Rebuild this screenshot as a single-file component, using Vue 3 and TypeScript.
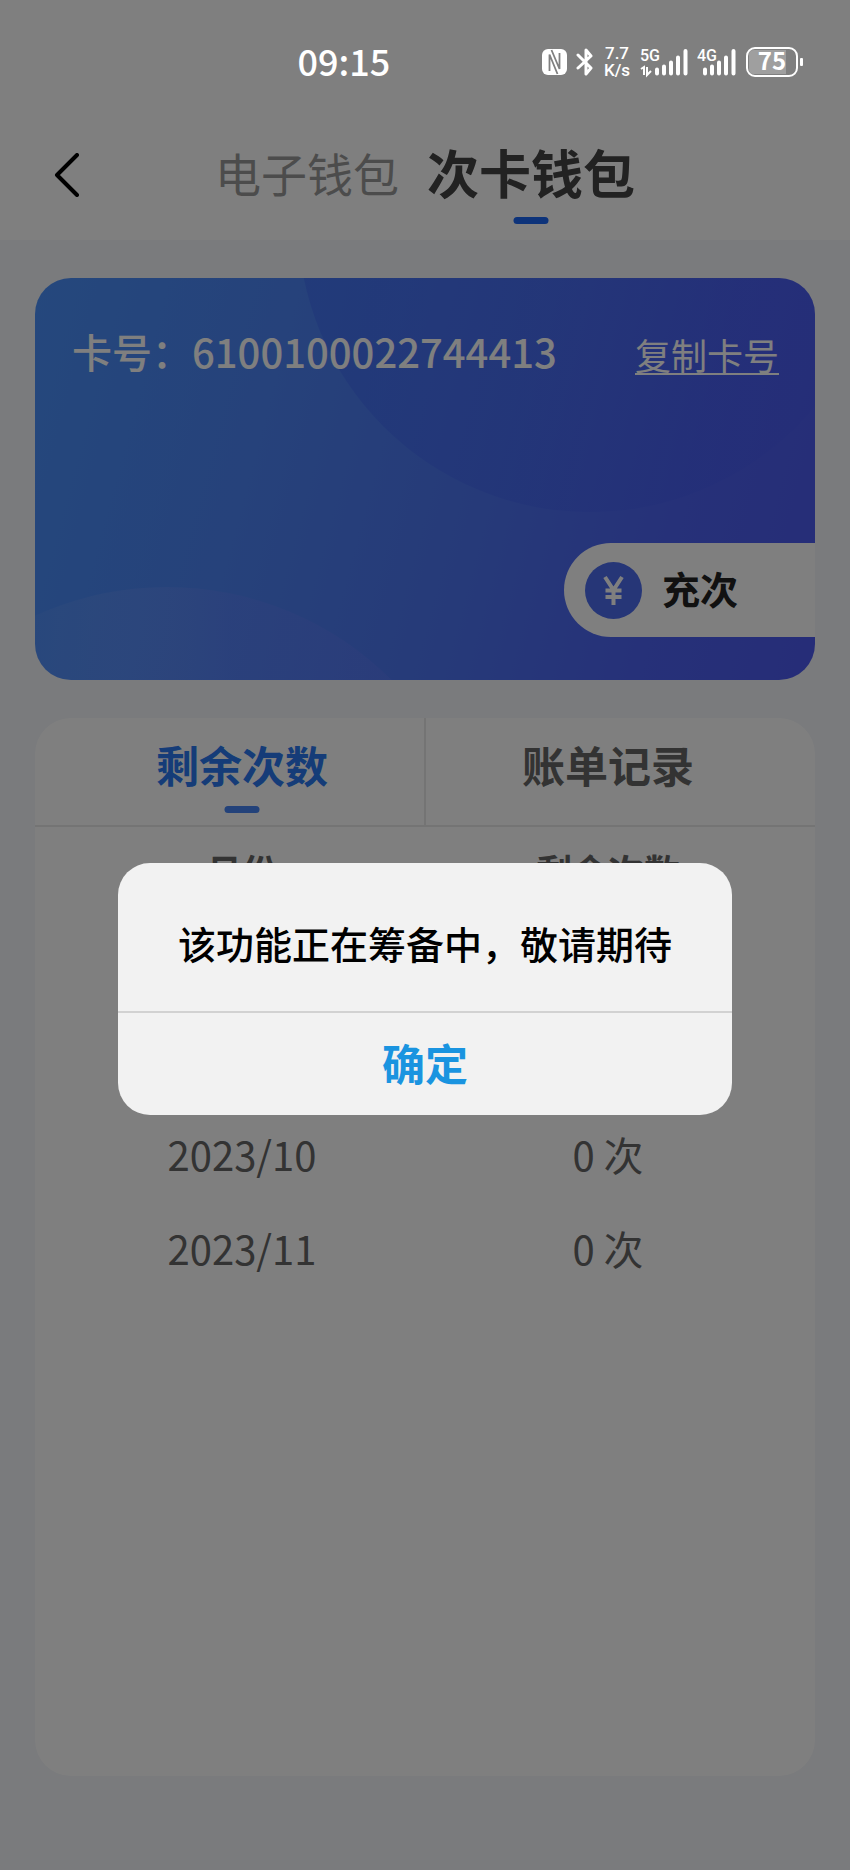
<script setup lang="ts">
import { ref } from 'vue'

interface Row {
  month: string
  count: number
}

const cardNumber = '6100100022744413'
const walletTabs = ['电子钱包', '次卡钱包']
const activeWallet = ref(1)
const listTabs = ['剩余次数', '账单记录']
const activeList = ref(0)
const rows: Row[] = [
  { month: '2023/08', count: 0 },
  { month: '2023/09', count: 0 },
  { month: '2023/10', count: 0 },
  { month: '2023/11', count: 0 },
]
const dialogOpen = ref(true)

function copyNumber() {
  navigator.clipboard?.writeText(cardNumber)
}
</script>

<template>
  <div class="page">
    <div class="status">
      <span class="time">09:15</span>
      <div class="indicators">
        <svg class="nfc" viewBox="0 0 25 26" aria-hidden="true">
          <rect width="25" height="26" rx="6" fill="#fff" />
          <path d="M7.500 22V5.500L15.500 25M9.500 1L17.500 20V4" fill="none" stroke="#808080" stroke-width="1.800" />
        </svg>
        <svg class="bluetooth" viewBox="0 0 18 28" aria-hidden="true">
          <path d="M2 7l13 13-5 6V2l5 6L2 20" fill="none" stroke="#fff" stroke-width="3" stroke-linejoin="round" stroke-linecap="round" />
        </svg>
        <div class="speed"><span>7.7</span><span>K/s</span></div>
        <svg class="signal-5g" viewBox="0 -4 48 36" aria-hidden="true">
          <text x="0" y="13" class="net">5G</text>
          <path d="M1 21l3-2v8M7 19v8l4-4" fill="none" stroke="#fff" stroke-width="2" />
          <path d="M17 21.500v4M24 18.500v7M31 14.500v11M38 9.500v16M45.500 3v22.500" stroke="#fff" stroke-width="4" stroke-linecap="round" />
        </svg>
        <svg class="signal-4g" viewBox="0 -4 40 36" aria-hidden="true">
          <text x="0" y="13" class="net">4G</text>
          <path d="M8 21.500v4M15 18.500v7M22 14.500v11M29 9.500v16M36.500 3v22.500" stroke="#fff" stroke-width="4" stroke-linecap="round" />
        </svg>
        <svg class="battery" viewBox="0 0 58 30" aria-hidden="true">
          <path d="M8 3h32v24H8q-5 0-5-5V8q0-5 5-5z" fill="#fff" fill-opacity=".25" />
          <rect x="1" y="1" width="50" height="28" rx="8" fill="none" stroke="#fff" stroke-width="2" />
          <rect x="54" y="11" width="3" height="8" rx="1" fill="#fff" />
          <text x="26" y="23" class="charge">75</text>
        </svg>
      </div>
    </div>

    <header class="topbar">
      <button class="back" type="button" aria-label="返回">
        <svg viewBox="0 0 26 44" aria-hidden="true">
          <path d="M23 2L3 22l20 20" fill="none" stroke="#000" stroke-width="4" stroke-linecap="round" stroke-linejoin="round" />
        </svg>
      </button>
      <nav class="wallets">
        <button
          v-for="(name, i) in walletTabs"
          :key="name"
          type="button"
          class="wallet"
          :class="{ active: i === activeWallet }"
          @click="activeWallet = i"
        >{{ name }}</button>
      </nav>
    </header>

    <main class="content">
      <section class="card">
        <svg class="card-art" viewBox="0 0 780 402" preserveAspectRatio="xMidYMid slice" aria-hidden="true">
          <defs>
            <linearGradient id="upper" x1="0" x2="1">
              <stop offset="0" stop-color="#3860f0" stop-opacity=".4" />
              <stop offset="1" stop-color="#4050f0" stop-opacity=".1" />
            </linearGradient>
            <linearGradient id="lower" x1="0" x2="1">
              <stop offset="0.200" stop-color="#fff" stop-opacity="0" />
              <stop offset="0.600" stop-color="#7a80ff" stop-opacity=".2" />
            </linearGradient>
          </defs>
          <circle cx="555" cy="-58" r="292" fill="url(#upper)" />
          <circle cx="132" cy="627" r="318" fill="url(#lower)" />
        </svg>
        <div class="card-head">
          <span class="number">卡号：{{ cardNumber }}</span>
          <button class="copy" type="button" @click="copyNumber">复制卡号</button>
        </div>
        <button class="recharge" type="button" @click="dialogOpen = true">
          <svg viewBox="0 0 57 57" aria-hidden="true">
            <circle cx="28.500" cy="28.500" r="28.500" fill="#4c6cee" />
            <path d="M20 15l8.500 13L37 15M28.500 28v15M20.500 28.500h16M20.500 35h16" fill="none" stroke="#fff" stroke-width="4" />
          </svg>
          <span>充次</span>
        </button>
      </section>

      <section class="panel">
        <div class="tabs">
          <button
            v-for="(name, i) in listTabs"
            :key="name"
            type="button"
            class="tab"
            :class="{ active: i === activeList }"
            @click="activeList = i"
          >{{ name }}</button>
        </div>
        <table class="records">
          <thead>
            <tr><th scope="col">月份</th><th scope="col">剩余次数</th></tr>
          </thead>
          <tbody>
            <tr v-for="row in rows" :key="row.month">
              <td>{{ row.month }}</td>
              <td>{{ row.count }} 次</td>
            </tr>
          </tbody>
        </table>
      </section>
    </main>

    <div v-if="dialogOpen" class="mask">
      <div class="dialog" role="alertdialog" aria-modal="true" aria-describedby="notice">
        <p id="notice">该功能正在筹备中，敬请期待</p>
        <button type="button" @click="dialogOpen = false">确定</button>
      </div>
    </div>
  </div>
</template>

<style>
body {
  background: #f4f6fa;
}
</style>

<style scoped>
.page {
  position: relative;
  display: flex;
  flex-direction: column;
  min-height: 100vh;
  background: #f4f6fa;
  font-family: "Noto Sans CJK SC", "Noto Sans", sans-serif;
  color: #666;
}
button {
  margin: 0;
  padding: 0;
  border: 0;
  background: none;
  color: inherit;
  font: inherit;
  cursor: pointer;
}
svg {
  display: block;
  flex: none;
}
.status {
  display: flex;
  align-items: center;
  justify-content: space-between;
  height: 108px;
  padding: 16px 46px 0 35%;
  box-sizing: border-box;
  background: #fff;
  color: #fff;
}
.time,
.indicators {
  position: relative;
  z-index: 3;
}
.time {
  padding-bottom: 4px;
  font-size: 36px;
  line-height: 40px;
  font-weight: 500;
}
.indicators {
  display: flex;
  align-items: center;
  gap: 9px;
}
.nfc { width: 25px; height: 26px; }
.bluetooth { width: 18px; height: 28px; }
.signal-5g { width: 48px; height: 36px; }
.signal-4g { width: 40px; height: 36px; }
.battery { width: 58px; height: 30px; }
.speed {
  display: flex;
  flex-direction: column;
  align-items: center;
  width: 28px;
  font: 500 17px/17px Roboto, sans-serif;
}
.net {
  font: 500 16px Roboto, sans-serif;
  fill: #fff;
}
.charge {
  font: 700 24px "Noto Sans CJK SC", sans-serif;
  text-anchor: middle;
  fill: #fff;
}
.topbar {
  position: relative;
  display: flex;
  justify-content: center;
  height: 132px;
  background: #fff;
}
.back {
  position: absolute;
  left: 54px;
  top: 45px;
}
.back svg {
  width: 26px;
  height: 44px;
}
.wallets {
  display: flex;
  align-items: flex-start;
  gap: 28px;
}
.wallet {
  height: 132px;
  padding-bottom: 4px;
  font-size: 46px;
  line-height: 128px;
  color: #999;
}
.wallet.active {
  position: relative;
  font-size: 52px;
  font-weight: 700;
  color: #444;
}
.wallet.active::after,
.tab.active::after {
  content: "";
  position: absolute;
  left: 50%;
  width: 35px;
  height: 7px;
  border-radius: 4px;
  transform: translateX(-50%);
}
.wallet.active::after {
  bottom: 16px;
  background: #1b66f5;
}
.content {
  flex: 1;
  display: flex;
  flex-direction: column;
  gap: 38px;
  padding: 38px 35px 94px;
}
.card {
  position: relative;
  display: flex;
  flex-direction: column;
  justify-content: space-between;
  height: 402px;
  padding: 49px 0 43px;
  box-sizing: border-box;
  border-radius: 36px;
  overflow: hidden;
  background: linear-gradient(105deg, #4a90fa 0%, #4c84f6 30%, #4c74f2 58%, #4c62f2 80%, #4c5af0 100%);
}
.card-art {
  position: absolute;
  inset: 0;
  width: 100%;
  height: 100%;
}
.card-head {
  position: relative;
  display: flex;
  align-items: flex-end;
  justify-content: space-between;
  padding: 0 36px 0 37px;
  color: #fff;
}
.number {
  font-size: 40px;
  line-height: 48px;
  font-weight: 500;
}
.copy {
  border-bottom: 2px solid #fff;
  font-size: 36px;
  line-height: 38px;
}
.recharge {
  position: relative;
  display: flex;
  align-items: center;
  align-self: flex-end;
  gap: 20px;
  width: 251px;
  height: 94px;
  padding-left: 21px;
  border-radius: 47px 0 0 47px;
  background: #fff;
  color: #222;
  font-size: 38px;
  line-height: 48px;
  font-weight: 700;
}
.recharge span {
  padding-bottom: 4px;
}
.recharge svg {
  width: 57px;
  height: 57px;
}
.panel {
  flex: 1;
  border-radius: 36px;
  background: #fff;
}
.tabs {
  display: flex;
  padding: 0 24px;
  border-bottom: 2px solid #e8e8e8;
}
.tab {
  position: relative;
  flex: 1;
  height: 107px;
  padding-bottom: 14px;
  font-size: 43px;
  line-height: 93px;
  font-weight: 700;
}
.tab + .tab {
  box-shadow: -1px 0 #e8e8e8, inset 1px 0 #e8e8e8;
}
.tab.active {
  color: #2a78f0;
}
.tab.active::after {
  bottom: 12px;
  background: #4684f4;
}
.records {
  width: 100%;
  padding: 0 24px;
  border-spacing: 0;
  table-layout: fixed;
}
.records th,
.records td {
  height: 94px;
  padding: 0 0 4px;
  box-sizing: border-box;
  text-align: center;
  font-size: 40px;
  line-height: 48px;
  font-weight: 400;
}
.records th {
  padding-bottom: 8px;
  font-size: 36px;
  font-weight: 700;
}
.mask {
  position: absolute;
  inset: 0;
  z-index: 2;
  display: flex;
  align-items: center;
  justify-content: center;
  padding-top: 108px;
  background: rgba(0, 0, 0, 0.5);
}
.dialog {
  display: flex;
  flex-direction: column;
  width: 72%;
  min-width: 614px;
  border-radius: 32px;
  overflow: hidden;
  background: #f2f2f2;
}
.dialog p {
  margin: 0;
  padding: 56px 0 44px;
  text-align: center;
  font-size: 38px;
  line-height: 48px;
  font-weight: 500;
  color: #000;
}
.dialog button {
  height: 104px;
  padding-bottom: 4px;
  border-top: 2px solid #d2d2d2;
  font-size: 43px;
  font-weight: 700;
  color: #1a94e0;
}
</style>
